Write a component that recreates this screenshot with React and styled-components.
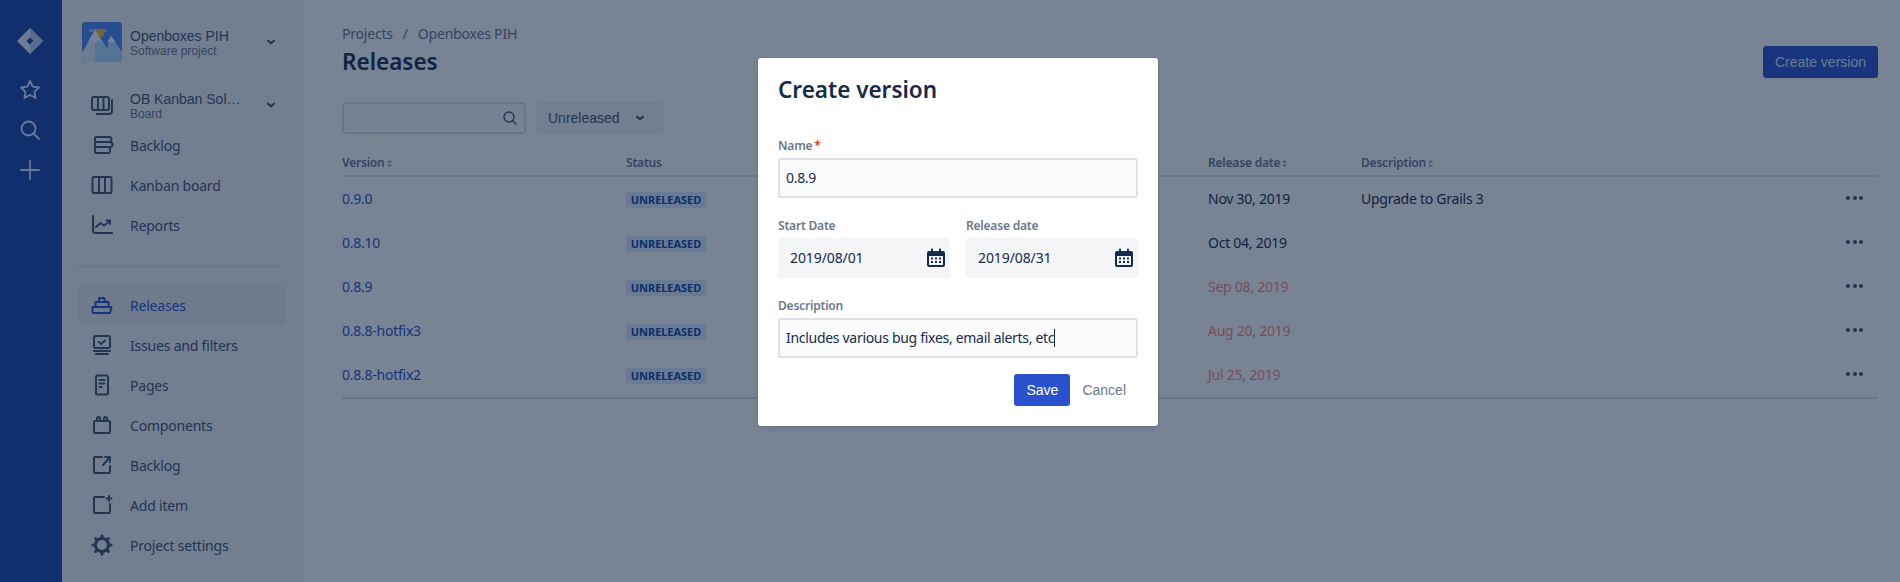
import React from 'react';
import styled, { createGlobalStyle } from 'styled-components';

const UI_FONT = '"Noto Sans", "Open Sans", sans-serif';
const ARIAL = '"Liberation Sans", Arial, sans-serif';
const BLUE = '#2a52cc';

const GlobalStyle = createGlobalStyle`
  html, body { margin: 0; padding: 0; height: 582px; overflow: hidden; background: #fff; }
  body { font-family: ${UI_FONT}; font-size: 14px; color: #172b4d; }
  * { box-sizing: border-box; }
`;

const Shell = styled.div`
  display: flex;
  width: 1900px;
  height: 582px;
  position: relative;
  overflow: hidden;
`;

const Rail = styled.div`
  width: 62px;
  flex: none;
  background: #1c46a6;
  display: flex;
  flex-direction: column;
  align-items: center;
  padding: 21px 2px 0 0;
  color: #deebff;
`;

const RailButton = styled.div`
  width: 32px;
  height: 40px;
  margin-top: ${(p) => p.$top || 0}px;
  display: flex;
  align-items: center;
  justify-content: center;
`;

const Sidebar = styled.div`
  width: 241px;
  flex: none;
  background: #f4f5f7;
  border-right: 1px solid #dfe1e6;
  padding: 22px 16px 0;
`;

const ProjectHead = styled.div`
  display: flex;
  align-items: center;
  height: 40px;
  padding-left: 4px;
  gap: 8px;
  margin-bottom: 24px;
`;

const NameBlock = styled.div`
  flex: 1;
  min-width: 0;
  font-family: ${ARIAL};
  letter-spacing: 0;
  margin-top: 2px;
`;

const NameTitle = styled.div`
  font-size: 14px;
  line-height: 16px;
  color: #42526e;
  white-space: nowrap;
`;

const NameSub = styled.div`
  font-size: 12px;
  line-height: 14px;
  color: #6b778c;
`;

const NavItem = styled.div`
  display: flex;
  align-items: center;
  height: 40px;
  padding: 0 0 2px 12px;
  gap: 16px;
  font-size: 14px;
  letter-spacing: -0.2px;
  border-radius: 3px;
  color: ${(p) => (p.$active ? BLUE : '#42526e')};
  background: ${(p) => (p.$active ? '#ebecf0' : 'transparent')};
`;

const IconBox = styled.span`
  width: 24px;
  height: 24px;
  flex: none;
  display: flex;
  align-items: center;
  justify-content: center;
`;

const Chevron = styled.span`
  width: 24px;
  height: 24px;
  margin-right: 3px;
  display: flex;
  align-items: center;
  justify-content: center;
  color: #42526e;
`;

const Divider = styled.div`
  height: 2px;
  background: #ebecf0;
  margin: 19px 0 19px;
`;

const Main = styled.div`
  flex: 1;
  min-width: 0;
  padding: 24px 22px 0 39px;
`;

const Crumbs = styled.div`
  display: flex;
  gap: 10px;
  line-height: 20px;
  color: #6b778c;
  letter-spacing: -0.2px;
`;

const TitleRow = styled.div`
  display: flex;
  align-items: flex-start;
  justify-content: space-between;
  margin-top: 1px;
`;

const PageTitle = styled.h1`
  margin: 0;
  padding-top: 1px;
  font-size: 22.5px;
  font-weight: 600;
  line-height: 32px;
  color: #172b4d;
`;

const PrimaryButton = styled.div`
  height: 32px;
  padding: 0 12px;
  margin-top: 1px;
  display: flex;
  align-items: center;
  justify-content: center;
  background: ${BLUE};
  color: ${(p) => p.$fg || '#deebff'};
  border-radius: 3px;
  font-family: ${ARIAL};
  font-size: 14px;
`;

const SaveButton = styled(PrimaryButton)`
  width: 56px;
  padding: 0;
`;

const Toolbar = styled.div`
  display: flex;
  gap: 10px;
  margin-top: 24px;
`;

const SearchBox = styled.div`
  width: 184px;
  height: 32px;
  border: 2px solid #dfe1e6;
  border-radius: 3px;
  background: #fafbfc;
  display: flex;
  align-items: center;
  justify-content: flex-end;
  padding-right: 6px;
  color: #42526e;
`;

const Select = styled.div`
  width: 128px;
  height: 32px;
  border-radius: 3px;
  background: #f4f5f7;
  display: flex;
  align-items: center;
  gap: 10px;
  padding-left: 12px;
  font-family: ${ARIAL};
  font-size: 14px;
  color: #42526e;
`;

const HeaderRow = styled.div`
  display: grid;
  grid-template-columns: 284px 582px 153px 1fr;
  margin-top: 21px;
  padding-bottom: 4px;
  border-bottom: 2px solid #dfe1e6;
`;

const HeaderCell = styled.div`
  display: flex;
  align-items: center;
  gap: 1px;
  font-size: 12px;
  font-weight: 600;
  line-height: 16px;
  letter-spacing: -0.2px;
  color: #6b778c;
`;

const Row = styled.div`
  display: grid;
  grid-template-columns: 284px 582px 153px 1fr 50px;
  align-items: center;
  height: 44px;
  padding-bottom: 2px;
`;

const Rows = styled.div`
  border-bottom: 2px solid #dfe1e6;
`;

const VersionLink = styled.div`
  color: ${BLUE};
  letter-spacing: -0.25px;
`;

const Lozenge = styled.span`
  display: block;
  width: 80px;
  height: 16px;
  margin-top: 3px;
  line-height: 16px;
  text-align: center;
  border-radius: 3px;
  background: #deebff;
  color: #0747a6;
  font-size: 11px;
  font-weight: 700;
  letter-spacing: -0.05px;
`;

const DateCell = styled.div`
  color: ${(p) => (p.$late ? '#ff8a80' : '#172b4d')};
  letter-spacing: -0.25px;
`;

const DescCell = styled.div`
  color: #172b4d;
  letter-spacing: -0.25px;
`;

const Dots = styled.div`
  display: flex;
  justify-content: flex-end;
  gap: 2.5px;
  padding-right: 15px;
`;

const Dot = styled.span`
  width: 4px;
  height: 4px;
  border-radius: 50%;
  background: #42526e;
`;

const Overlay = styled.div`
  position: absolute;
  inset: 0;
  background: rgba(9, 30, 60, 0.55);
  display: flex;
  justify-content: center;
  align-items: flex-start;
  padding: 58px 0 0 16px;
`;

const Modal = styled.div`
  width: 400px;
  height: 368px;
  background: #fff;
  border-radius: 3px;
  padding: 15px 20px 20px;
  box-shadow: 0 0 1px rgba(9, 30, 66, 0.31), 0 4px 8px -4px rgba(9, 30, 66, 0.25);
`;

const ModalTitle = styled.h2`
  margin: 0 0 31px;
  padding-top: 1px;
  font-size: 22.5px;
  font-weight: 600;
  line-height: 32px;
  color: #172b4d;
`;

const Field = styled.div`
  margin-bottom: 19px;
`;

const Label = styled.div`
  font-size: 12px;
  font-weight: 600;
  line-height: 16px;
  letter-spacing: -0.2px;
  color: #6b778c;
  padding-top: 1px;
  margin-bottom: 4px;
`;

const Required = styled.span`
  color: #de350b;
  margin-left: 2px;
`;

const TextBox = styled.div`
  height: 40px;
  border: 2px solid #dfe1e6;
  border-radius: 3px;
  background: #fafbfc;
  padding: 0 0 2px 6px;
  display: flex;
  align-items: center;
  font-size: 14px;
  letter-spacing: -0.3px;
  color: #172b4d;
`;

const Caret = styled.span`
  width: 1px;
  height: 18px;
  margin-top: 2px;
  background: #172b4d;
`;

const DateGrid = styled.div`
  display: grid;
  grid-template-columns: 172px 172px;
  gap: 16px;
`;

const DateBox = styled.div`
  height: 40px;
  border-radius: 3px;
  background: #f4f5f7;
  display: flex;
  align-items: center;
  justify-content: space-between;
  padding: 0 2px 2px 12px;
  letter-spacing: -0.1px;
  color: #172b4d;
`;

const CalendarSlot = styled.span`
  display: flex;
  margin-top: 2px;
`;

const Actions = styled.div`
  display: flex;
  justify-content: flex-end;
  align-items: center;
  margin-top: -4px;
`;

const CancelLink = styled.div`
  font-family: ${ARIAL};
  font-size: 14px;
  color: #6b778c;
  padding: 0 12px;
`;

const Glyph = ({ size = 24, children, sw = 2 }) => (
  <svg
    width={size}
    height={size}
    viewBox="0 0 24 24"
    fill="none"
    stroke="currentColor"
    strokeWidth={sw}
    strokeLinecap="round"
    strokeLinejoin="round"
  >
    {children}
  </svg>
);

const ChevronDown = ({ size = 20 }) => (
  <Glyph size={size} sw={2.6}>
    <path d="M8.5 10.5l3.5 3 3.5-3" />
  </Glyph>
);

const JiraMark = () => (
  <svg width="28" height="28" viewBox="0 0 28 28">
    <path d="M14 1L1 14l13 13 13-13L14 1z" fill="#e8f0ff" />
    <path d="M14 1v9l4 4-4 4v9l13-13L14 1z" fill="#b8cdf0" />
    <path d="M14 10.5L10.5 14l3.5 3.5 3.5-3.5L14 10.5z" fill="#1c46a6" />
  </svg>
);

const LogoSvg = styled.svg`
  flex: none;
  border-radius: 3px;
`;

const ProjectLogo = () => (
  <LogoSvg width="40" height="40" viewBox="0 0 40 40">
    <rect width="40" height="40" fill="#4c8bf9" />
    <rect x="7" y="7" width="18" height="3" rx="1.5" fill="#8fbafc" />
    <circle cx="18" cy="11" r="4" fill="#ffc400" />
    <path d="M13 40V8l12 18 4-12 11 16v10z" fill="#b2dcff" />
    <path d="M0 40v-9L13 8v32z" fill="#e0efff" />
    <path d="M13 8L6 20l3.5-2 3.5 3 3-3 4 2z" fill="#fff" />
    <path d="M29 14l-4 7 3-1.5 2.5 1.5 2.5-1.5z" fill="#fff" />
  </LogoSvg>
);

const BoardStack = () => (
  <Glyph>
    <rect x="2" y="4" width="17" height="13" rx="2" />
    <path d="M8 4v13M13.5 4v13M22 7v11a3 3 0 0 1-3 3H7" />
  </Glyph>
);
const BacklogIcon = () => (
  <Glyph>
    <path d="M6 4h13a2 2 0 0 1 0 5H6a1 1 0 0 1-1-1V5a1 1 0 0 1 1-1zM6 9h14a2 2 0 0 1 0 5H6a1 1 0 0 1-1-1v-3a1 1 0 0 1 1-1zM6 14h13a1 1 0 0 1 1 1v3a2 2 0 0 1-2 2H6a1 1 0 0 1-1-1v-4a1 1 0 0 1 1-1z" />
  </Glyph>
);
const ColumnsIcon = () => (
  <Glyph>
    <rect x="2.5" y="4" width="19" height="16" rx="1.5" />
    <path d="M9 4v16M15 4v16" />
  </Glyph>
);
const ReportsIcon = () => (
  <Glyph>
    <path d="M3 3v15a2 2 0 0 0 2 2h17M6 14l4.5-4 3.5 2.5L20 8M16.5 7.5H20V11" />
  </Glyph>
);
const ShipIcon = () => (
  <Glyph>
    <path d="M2.5 14h19l-1.5 6H4a1.5 1.5 0 0 1-1.5-1.5V14zM5.5 14V9h13v5M9 9V5h5l1 4" />
  </Glyph>
);
const IssuesIcon = () => (
  <Glyph>
    <rect x="4" y="3" width="16" height="12" rx="1.5" />
    <path d="M9 9l2 2 4-3.5M4 18h16M6 21h12" />
  </Glyph>
);
const PageIcon = () => (
  <Glyph>
    <rect x="6" y="2.5" width="12" height="19" rx="1.5" />
    <path d="M9.5 7h5M9.5 10.5h5M9.5 14h2" />
  </Glyph>
);
const ComponentIcon = () => (
  <Glyph>
    <path d="M5 8h14a1 1 0 0 1 1 1v10a1 1 0 0 1-1 1H5a1 1 0 0 1-1-1V9a1 1 0 0 1 1-1zM7 8V5.5a1 1 0 0 1 3 0V8M14 8V5.5a1 1 0 0 1 3 0V8" />
  </Glyph>
);
const ExternalIcon = () => (
  <Glyph>
    <path d="M12 4H5a1 1 0 0 0-1 1v14a1 1 0 0 0 1 1h14a1 1 0 0 0 1-1v-6M13 12l7-8M15 4h5v5" />
  </Glyph>
);
const AddItemIcon = () => (
  <Glyph>
    <path d="M14 4H5a1 1 0 0 0-1 1v14a1 1 0 0 0 1 1h14a1 1 0 0 0 1-1V11M19 3v5M16.5 5.5h5" />
  </Glyph>
);
const GearIcon = () => (
  <Glyph sw={3}>
    <circle cx="12" cy="12" r="6.5" />
    <path d="M12 3v2M12 19v2M3 12h2M19 12h2M5.6 5.6L7 7M17 17l1.4 1.4M18.4 5.6L17 7M7 17l-1.4 1.4" />
  </Glyph>
);

const CalendarIcon = () => (
  <svg width="24" height="24" viewBox="0 0 24 24" fill="#172b4d">
    <path d="M5 5h2V3.5a1 1 0 0 1 2 0V5h6V3.5a1 1 0 0 1 2 0V5h2a2 2 0 0 1 2 2v12a2 2 0 0 1-2 2H5a2 2 0 0 1-2-2V7a2 2 0 0 1 2-2zm0 5v9h14v-9H5z" />
    <path d="M7 11.5h2v2H7zM11 11.5h2v2h-2zM15 11.5h2v2h-2zM7 15h2v2H7zM11 15h2v2h-2zM15 15h2v2h-2z" />
  </svg>
);

const SortArrows = () => (
  <svg width="7" height="9" viewBox="0 0 8 10" fill="#a5adba">
    <path d="M4 0.5L7 4H1zM4 9.5L1 6h6z" />
  </svg>
);

const navTop = [
  { label: 'Backlog', icon: <BacklogIcon /> },
  { label: 'Kanban board', icon: <ColumnsIcon /> },
  { label: 'Reports', icon: <ReportsIcon /> },
];

const navBottom = [
  { label: 'Releases', icon: <ShipIcon />, active: true },
  { label: 'Issues and filters', icon: <IssuesIcon /> },
  { label: 'Pages', icon: <PageIcon /> },
  { label: 'Components', icon: <ComponentIcon /> },
  { label: 'Backlog', icon: <ExternalIcon /> },
  { label: 'Add item', icon: <AddItemIcon /> },
  { label: 'Project settings', icon: <GearIcon /> },
];

const releases = [
  { version: '0.9.0', date: 'Nov 30, 2019', desc: 'Upgrade to Grails 3' },
  { version: '0.8.10', date: 'Oct 04, 2019' },
  { version: '0.8.9', date: 'Sep 08, 2019', late: true },
  { version: '0.8.8-hotfix3', date: 'Aug 20, 2019', late: true },
  { version: '0.8.8-hotfix2', date: 'Jul 25, 2019', late: true },
];

const App = () => {
  return (
    <Shell>
      <GlobalStyle />
      <Rail>
        <RailButton><JiraMark /></RailButton>
        <RailButton $top={9}>
          <Glyph size={24} sw={1.8}>
            <path d="M12 3l2.7 5.7 6.3.8-4.6 4.3 1.2 6.2-5.6-3.1L6.4 20l1.2-6.2L3 9.5l6.3-.8z" />
          </Glyph>
        </RailButton>
        <RailButton>
          <Glyph size={24} sw={1.8}>
            <circle cx="10.5" cy="10.5" r="7" />
            <path d="M15.8 15.8L21 21" />
          </Glyph>
        </RailButton>
        <RailButton>
          <Glyph size={24} sw={1.8}>
            <path d="M12 3v18M3 12h18" />
          </Glyph>
        </RailButton>
      </Rail>

      <Sidebar>
        <ProjectHead>
          <ProjectLogo />
          <NameBlock>
            <NameTitle>Openboxes PIH</NameTitle>
            <NameSub>Software project</NameSub>
          </NameBlock>
          <Chevron><ChevronDown /></Chevron>
        </ProjectHead>
        <NavItem>
          <IconBox><BoardStack /></IconBox>
          <NameBlock>
            <NameTitle>OB Kanban Sol…</NameTitle>
            <NameSub>Board</NameSub>
          </NameBlock>
          <Chevron><ChevronDown /></Chevron>
        </NavItem>
        {navTop.map((item) => (
          <NavItem key={item.label}>
            <IconBox>{item.icon}</IconBox>
            {item.label}
          </NavItem>
        ))}
        <Divider />
        {navBottom.map((item) => (
          <NavItem key={item.label} $active={item.active}>
            <IconBox>{item.icon}</IconBox>
            {item.label}
          </NavItem>
        ))}
      </Sidebar>

      <Main>
        <Crumbs>
          <span>Projects</span>
          <span>/</span>
          <span>Openboxes PIH</span>
        </Crumbs>
        <TitleRow>
          <PageTitle>Releases</PageTitle>
          <PrimaryButton>Create version</PrimaryButton>
        </TitleRow>
        <Toolbar>
          <SearchBox>
            <Glyph size={16} sw={2}>
              <circle cx="10.5" cy="10.5" r="7.5" />
              <path d="M16 16l5 5" />
            </Glyph>
          </SearchBox>
          <Select>
            Unreleased
            <ChevronDown />
          </Select>
        </Toolbar>
        <HeaderRow>
          <HeaderCell>Version <SortArrows /></HeaderCell>
          <HeaderCell>Status</HeaderCell>
          <HeaderCell>Release date <SortArrows /></HeaderCell>
          <HeaderCell>Description <SortArrows /></HeaderCell>
        </HeaderRow>
        <Rows>
          {releases.map((r) => (
            <Row key={r.version}>
              <VersionLink>{r.version}</VersionLink>
              <div><Lozenge>UNRELEASED</Lozenge></div>
              <DateCell $late={r.late}>{r.date}</DateCell>
              <DescCell>{r.desc}</DescCell>
              <Dots><Dot /><Dot /><Dot /></Dots>
            </Row>
          ))}
        </Rows>
      </Main>

      <Overlay>
        <Modal>
          <ModalTitle>Create version</ModalTitle>
          <Field>
            <Label>Name<Required>*</Required></Label>
            <TextBox>0.8.9</TextBox>
          </Field>
          <Field>
            <DateGrid>
              <div>
                <Label>Start Date</Label>
                <DateBox>2019/08/01<CalendarSlot><CalendarIcon /></CalendarSlot></DateBox>
              </div>
              <div>
                <Label>Release date</Label>
                <DateBox>2019/08/31<CalendarSlot><CalendarIcon /></CalendarSlot></DateBox>
              </div>
            </DateGrid>
          </Field>
          <Field>
            <Label>Description</Label>
            <TextBox>Includes various bug fixes, email alerts, etc<Caret /></TextBox>
          </Field>
          <Actions>
            <SaveButton $fg="#fff">Save</SaveButton>
            <CancelLink>Cancel</CancelLink>
          </Actions>
        </Modal>
      </Overlay>
    </Shell>
  );
};

export default App;
